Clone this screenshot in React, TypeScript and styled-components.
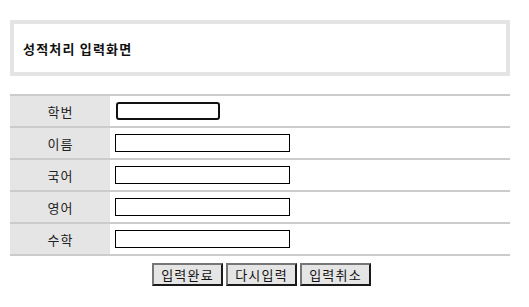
import React from 'react';
import styled, { createGlobalStyle } from 'styled-components';

const GlobalStyle = createGlobalStyle`
  body {
    margin: 0;
    background: #fff;
    font-family: "Noto Sans CJK KR", "Noto Sans", sans-serif;
  }
`;

const fields = [
  { label: '학번', name: 'hakbun', focused: true },
  { label: '이름', name: 'irum' },
  { label: '국어', name: 'kor' },
  { label: '영어', name: 'eng' },
  { label: '수학', name: 'math' },
];

export default function App() {
  return (
    <Page>
      <GlobalStyle />
      <TitleBox>
        <Title>성적처리 입력화면</Title>
      </TitleBox>

      <Form onSubmit={(e) => e.preventDefault()}>
        <Grid>
          {fields.map((f) => (
            <Row key={f.name}>
              <Label>{f.label}</Label>
              <Cell>
                <Field name={f.name} $focused={f.focused} />
              </Cell>
            </Row>
          ))}
        </Grid>

        <Buttons>
          <Button type="submit">입력완료</Button>
          <Button type="reset">다시입력</Button>
          <Button type="button">입력취소</Button>
        </Buttons>
      </Form>
    </Page>
  );
}

const Page = styled.div`
  width: 500px;
  padding: 20px 10px;
`;

const TitleBox = styled.div`
  height: 56px;
  box-sizing: border-box;
  border: 4px solid #e4e4e4;
  display: flex;
  align-items: center;
  padding-left: 9px;
`;

const Title = styled.h1`
  margin: 0;
  font-size: 13px;
  font-weight: bold;
  letter-spacing: 1.2px;
  color: #111;
`;

const Form = styled.form`
  margin-top: 18px;
`;

const Grid = styled.div`
  border-bottom: 2px solid #cccccc;
`;

const Row = styled.div`
  display: grid;
  grid-template-columns: 100px 1fr;
  height: 30px;
  border-top: 2px solid #cccccc;
`;

const Label = styled.div`
  background: #e5e5e5;
  display: flex;
  align-items: center;
  justify-content: center;
  padding-left: 1px;
  font-size: 13px;
  letter-spacing: 1px;
  color: #222;
`;

const Cell = styled.div`
  display: flex;
  align-items: center;
  padding-left: 5px;
`;

const Field = styled.input<{ $focused?: boolean }>`
  box-sizing: border-box;
  width: ${({ $focused }) => ($focused ? '104px' : '175px')};
  height: 18px;
  margin-left: ${({ $focused }) => ($focused ? '1px' : '0')};
  border: ${({ $focused }) => ($focused ? '2px solid #111' : '1px solid #000')};
  border-radius: ${({ $focused }) => ($focused ? '3px' : '0')};
  padding: 0 2px;
  outline: none;
  font-size: 13px;
  background: #fff;
`;

const Buttons = styled.div`
  display: flex;
  justify-content: center;
  gap: 3px;
  margin-top: 7px;
  padding-left: 2px;
`;

const Button = styled.button`
  box-sizing: border-box;
  height: 23px;
  width: 71px;
  padding: 0 0 0 1px;
  background: #e5e5e5;
  border: 2px solid;
  border-color: #767676 #1a1a1a #1a1a1a #767676;
  font-family: "Noto Sans CJK KR", sans-serif;
  font-size: 13px;
  letter-spacing: 1.2px;
  color: #111;
  cursor: pointer;
`;
